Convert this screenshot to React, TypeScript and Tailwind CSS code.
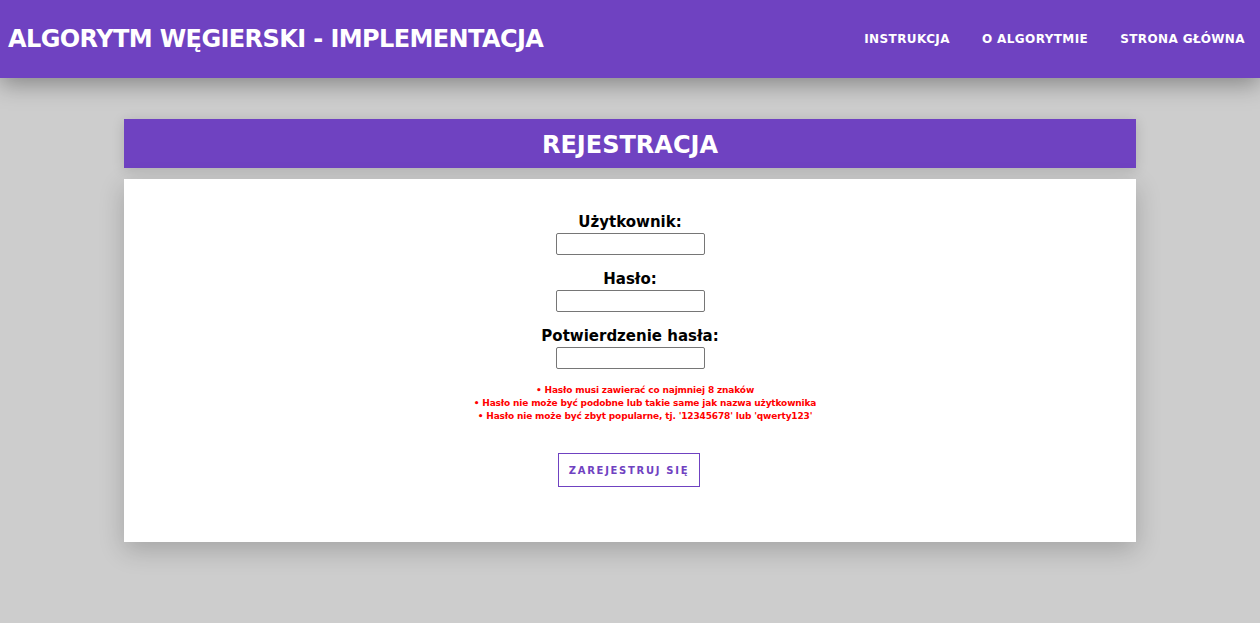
const navItems = ['INSTRUKCJA', 'O ALGORYTMIE', 'STRONA GŁÓWNA'];

const rules = [
  'Hasło musi zawierać co najmniej 8 znaków',
  'Hasło nie może być podobne lub takie same jak nazwa użytkownika',
  "Hasło nie może być zbyt popularne, tj. '12345678' lub 'qwerty123'",
];

function Field({ label }: { label: string }) {
  return (
    <div className="flex flex-col items-center mb-[13px]">
      <label className="text-[15px] leading-[22px] font-bold text-black">{label}</label>
      <input
        type="text"
        className="w-[149px] h-[22px] border border-[#767676] rounded-[2px] bg-white"
      />
    </div>
  );
}

export default function App() {
  return (
    <div className="min-h-[623px] bg-[#cdcdcd] font-['DejaVu_Sans',sans-serif]">
      <header className="h-[78px] bg-[#6f42c1] flex items-center justify-between pl-[8px] pr-[15px] shadow-[0_6px_22px_rgba(0,0,0,0.35)] relative">
        <h1 className="text-white font-bold text-[24px] tracking-[-0.6px]">ALGORYTM WĘGIERSKI - IMPLEMENTACJA</h1>
        <nav className="flex gap-[32px]">
          {navItems.map((item) => (
            <a key={item} href="#" className="text-white font-bold text-[12px] tracking-[0.4px]">
              {item}
            </a>
          ))}
        </nav>
      </header>

      <main className="w-[1012px] mx-auto pt-[41px]">
        <div className="h-[49px] bg-[#6f42c1] flex items-center justify-center shadow-[0_2px_12px_rgba(0,0,0,0.15)]">
          <h2 className="text-white font-bold text-[24px] mt-[2px]">REJESTRACJA</h2>
        </div>

        <div className="mt-[11px] bg-white h-[363px] pt-[32px] flex flex-col items-center shadow-[0_8px_24px_rgba(0,0,0,0.2)]">
          <Field label="Użytkownik:" />
          <Field label="Hasło:" />
          <Field label="Potwierdzenie hasła:" />

          <ul className="mt-[2px] pl-[30px] text-center text-[#ff0000] font-bold text-[9px] tracking-[-0.15px] leading-[13px]">
            {rules.map((r) => (
              <li key={r}>• {r}</li>
            ))}
          </ul>

          <button className="mt-[30px] -ml-[2px] w-[142px] h-[34px] border border-[#6f42c1] text-[#6f42c1] text-[10px] font-bold tracking-[1.7px] bg-white">
            ZAREJESTRUJ SIĘ
          </button>
        </div>
      </main>
    </div>
  );
}
